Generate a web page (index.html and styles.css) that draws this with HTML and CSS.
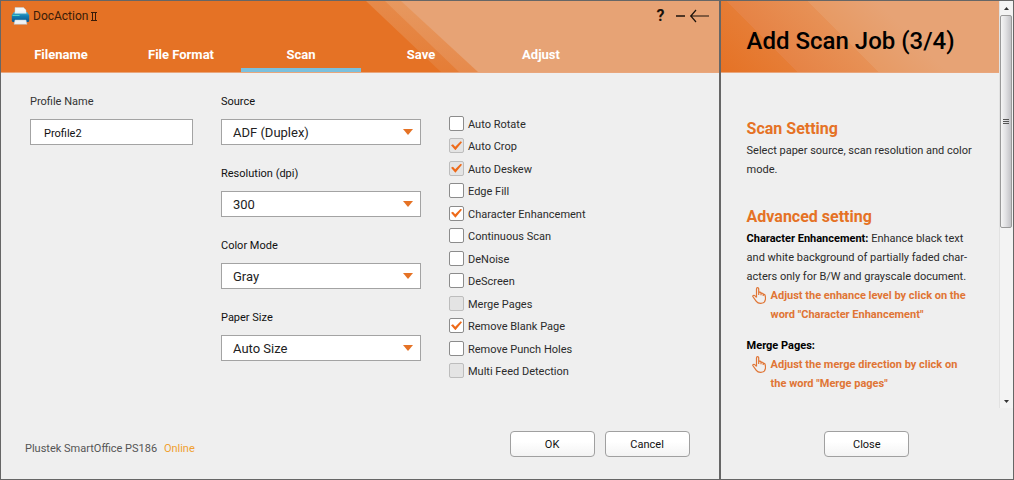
FILE: index.html
```html
<!DOCTYPE html>
<html lang="en">
<head>
<meta charset="utf-8">
<title>DocAction II</title>
<link rel="stylesheet" href="styles.css">
</head>
<body>
<main class="pane settings">
  <header class="banner">
    <svg class="stripes" viewBox="0 0 718 71" preserveAspectRatio="xMinYMin slice" aria-hidden="true">
      <defs>
        <linearGradient id="fade1" x1="0" y1="0" x2="0" y2="1"><stop offset="0" stop-color="#e68a4a"/><stop offset="1" stop-color="#e57d36"/></linearGradient>
        <linearGradient id="fade2" x1="0" y1="0" x2="0" y2="1"><stop offset="0" stop-color="#e7985f"/><stop offset="1" stop-color="#e68a4c"/></linearGradient>
      </defs>
      <path fill="url(#fade1)" d="M365 0H720V71H440Z"/>
      <path fill="url(#fade2)" d="M384 0H720V71H458Z"/>
      <path fill="#e7a375" d="M400 0H720V71H477Z"/>
    </svg>
    <div class="titlebar">
      <svg class="printer" viewBox="0 0 18 18" aria-hidden="true">
        <defs>
          <linearGradient id="body" x1="0" y1="0" x2="0" y2="1"><stop offset="0" stop-color="#4fb4cf"/><stop offset=".4" stop-color="#137fb4"/><stop offset="1" stop-color="#0a568c"/></linearGradient>
        </defs>
        <path d="M3.500 .5H12L14.500 3V8H3.500Z" fill="#f4f7f8" stroke="#c4cdd2" stroke-width=".5"/>
        <path d="M2.500 5H15.500L17.700 8V13.500Q17.700 15 16.200 15H1.800Q.3 15 .3 13.500V8Z" fill="url(#body)"/>
        <path d="M3.500 4.500H14.500L15 6.500H3Z" fill="#e9f1f4"/>
        <path d="M1 8.500H8" stroke="#4fd0c8"/>
        <path d="M3.500 13H14.500L15.500 17.300H2.500Z" fill="#eef2f5" stroke="#b5c5cf" stroke-width=".5"/>
      </svg>
      <span class="app-name">DocAction</span>
      <svg class="roman" viewBox="0 0 6 9" aria-hidden="true"><path d="M0 .5H6M0 8.500H6M1.500 0V9M4.500 0V9" fill="none" stroke="#3a1c08"/></svg>
      <div class="window-buttons">
        <button type="button" class="win help">?</button>
        <button type="button" class="win" aria-label="Minimize"><svg width="9" height="18" viewBox="0 0 9 18"><path d="M0 9H9" stroke="#1c120b" stroke-width="1.500"/></svg></button>
        <button type="button" class="win" aria-label="Back"><svg width="19" height="18" viewBox="0 0 19 18"><path d="M0 9H19M6 3L0.800 9L6 15" fill="none" stroke="#1c120b" stroke-width="1.200"/></svg></button>
      </div>
    </div>
    <nav class="tabs">
      <a href="#filename">Filename</a>
      <a href="#format">File Format</a>
      <a href="#scan" class="current" aria-current="page">Scan</a>
      <a href="#save">Save</a>
      <a href="#adjust">Adjust</a>
    </nav>
  </header>
  <form class="form" id="scan">
    <div class="field profile">
      <label for="profile">Profile Name</label>
      <input id="profile" type="text" value="Profile2">
    </div>
    <div class="selects">
      <div class="field"><label for="source">Source</label><div class="drop"><select id="source"><option>ADF (Duplex)</option></select></div></div>
      <div class="field"><label for="resolution">Resolution (dpi)</label><div class="drop"><select id="resolution"><option>300</option></select></div></div>
      <div class="field"><label for="mode">Color Mode</label><div class="drop"><select id="mode"><option>Gray</option></select></div></div>
      <div class="field"><label for="paper">Paper Size</label><div class="drop"><select id="paper"><option>Auto Size</option></select></div></div>
    </div>
    <div class="checks">
      <label><input type="checkbox">Auto Rotate</label>
      <label><input type="checkbox" checked disabled>Auto Crop</label>
      <label><input type="checkbox" checked disabled>Auto Deskew</label>
      <label><input type="checkbox">Edge Fill</label>
      <label><input type="checkbox" checked>Character Enhancement</label>
      <label><input type="checkbox">Continuous Scan</label>
      <label><input type="checkbox">DeNoise</label>
      <label><input type="checkbox">DeScreen</label>
      <label><input type="checkbox" disabled>Merge Pages</label>
      <label><input type="checkbox" checked>Remove Blank Page</label>
      <label><input type="checkbox">Remove Punch Holes</label>
      <label><input type="checkbox" disabled>Multi Feed Detection</label>
    </div>
  </form>
  <footer class="footer">
    <p class="device">Plustek SmartOffice PS186 <span class="online">Online</span></p>
    <div class="actions">
      <button type="button" class="btn">OK</button>
      <button type="button" class="btn">Cancel</button>
    </div>
  </footer>
</main>
<aside class="pane guide">
  <div class="viewport">
    <article class="article">
      <header class="guide-head"><h1>Add Scan Job (3/4)</h1></header>
      <div class="guide-body">
        <section>
          <h2>Scan Setting</h2>
          <p>Select paper source, scan resolution and color<br>mode.</p>
        </section>
        <section>
          <h2>Advanced setting</h2>
          <p><b>Character Enhancement:</b> Enhance black text<br>and white background of partially faded char-<br>acters only for B/W and grayscale document.</p>
          <div class="tip">
            <svg class="hand" viewBox="0 0 14 17" aria-hidden="true"><path d="M4.500 10.500V2Q4.500 .7 5.600 .7T6.700 2V8M6.700 7V6Q7 5 8 5.200T9 6.300V8.300M9 7Q9.300 5.800 10.300 6.200T11.200 7.200V9M11.200 8Q12 6.800 12.800 7.700Q13.800 10 13.400 12.500Q12.800 16.300 8.800 16.300Q5.800 16.400 4.300 14.300L.8 9.500Q.6 8.200 2 8.300Q3.500 8.800 4.500 10.500" fill="none" stroke="currentColor" stroke-width="1.200" stroke-linejoin="round"/></svg>
            <p>Adjust the enhance level by click on the<br>word "Character Enhancement"</p>
          </div>
          <h3>Merge Pages:</h3>
          <div class="tip">
            <svg class="hand" viewBox="0 0 14 17" aria-hidden="true"><path d="M4.500 10.500V2Q4.500 .7 5.600 .7T6.700 2V8M6.700 7V6Q7 5 8 5.200T9 6.300V8.300M9 7Q9.300 5.800 10.300 6.200T11.200 7.200V9M11.200 8Q12 6.800 12.800 7.700Q13.800 10 13.400 12.500Q12.800 16.300 8.800 16.300Q5.800 16.400 4.300 14.300L.8 9.500Q.6 8.200 2 8.300Q3.500 8.800 4.500 10.500" fill="none" stroke="currentColor" stroke-width="1.200" stroke-linejoin="round"/></svg>
            <p>Adjust the merge direction by click on<br>the word "Merge pages"</p>
          </div>
        </section>
      </div>
    </article>
    <div class="scrollbar" aria-hidden="true">
      <svg class="arrow" viewBox="0 0 13 14"><path d="M4 9L6.500 6L9 9Z" fill="#333"/></svg>
      <div class="thumb"><span></span><span></span><span></span></div>
      <svg class="arrow" viewBox="0 0 13 14"><path d="M4 6H9L6.500 9Z" fill="#333"/></svg>
    </div>
  </div>
  <footer class="guide-foot"><button type="button" class="btn">Close</button></footer>
</aside>
</body>
</html>
```

FILE: styles.css
```css
* { box-sizing: border-box; }
body {
  margin: 0;
  min-height: 100vh;
  display: flex;
  background: #efefef;
  color: #2b2b2b;
  font: 11px/16px Roboto, "Liberation Sans", sans-serif;
}
h1, h2, h3, p { margin: 0; }
.pane { display: flex; flex-direction: column; border: 1px solid #666; }
.settings { flex: 719 1 0; }
.guide { flex: 293 1 0; }

.banner { position: relative; height: 72px; background: #e57225; border-bottom: 1px solid #e9a67c; display: flex; flex-direction: column; }
.stripes { position: absolute; inset: 0; width: 100%; height: 100%; }
.titlebar { position: relative; display: flex; align-items: center; height: 30px; padding: 0 10px; color: #3a1c08; }
.printer { width: 19px; height: 18px; margin-right: 3px; }
.app-name { font-size: 12px; }
.roman { width: 6px; height: 9px; margin-left: 3px; }
.window-buttons { display: flex; align-items: center; margin-left: auto; gap: 5px; }
.win { display: flex; border: 0; padding: 0; background: none; color: #1c120b; font: 700 16px/18px Roboto, sans-serif; }
.help { margin-right: 6px; }
.tabs { position: relative; flex: 1; display: flex; }
.tabs a { flex: 0 1 120px; display: flex; align-items: center; justify-content: center; padding-top: 11px; border-bottom: 4px solid transparent; color: #fff; font-size: 13px; font-weight: 700; text-decoration: none; }
.tabs .current { border-bottom-color: #7bc0dd; }

.form { flex: 1; display: grid; grid-template-columns: 163px 200px auto; column-gap: 28px; justify-content: start; align-items: start; padding: 21px 28px 0 29px; }
.field { display: flex; flex-direction: column; gap: 9px; }
.field input, .drop select { width: 100%; height: 26px; border: 1px solid #a3a3a3; border-radius: 0; background: #fff; }
.field input { padding: 2px 13px 0; color: #111; font: 11px Roboto, sans-serif; }
.profile { color: #333; }
.selects { display: grid; gap: 21px; color: #111; }
.drop { display: grid; align-items: center; }
.drop select { grid-area: 1 / 1; appearance: none; padding: 0 30px 0 11px; color: #222; font: 13px Roboto, sans-serif; }
.drop::after { content: ""; grid-area: 1 / 1; justify-self: end; margin-right: 8px; border: 5px solid transparent; border-top: 6px solid #e57225; border-bottom: 0; pointer-events: none; }
.checks { display: grid; grid-auto-rows: 1fr; min-height: 270px; margin-top: 19px; }
.checks label { display: flex; align-items: center; gap: 4px; padding-top: 1px; }
.checks input { appearance: none; width: 15px; height: 15px; margin: 0 0 3px; border: 1px solid #8c8c8c; border-radius: 2px; background: #fff; display: grid; place-items: center; }
.checks input:disabled { background: #e4e4e4; border-color: #bdbdbd; }
.checks input:checked::after { content: ""; width: 11px; height: 9px; background: #ee6a19; clip-path: polygon(0 45%, 18% 32%, 38% 62%, 88% 0, 100% 12%, 40% 100%); }

.footer { display: flex; align-items: center; justify-content: space-between; padding: 0 29px 22px 24px; color: #555; }
.device { padding-top: 10px; }
.online { margin-left: 4px; color: #f0a030; }
.actions { display: flex; gap: 10px; }
.btn { width: 85px; height: 26px; border: 1px solid #a0a0a0; border-radius: 4px; background: linear-gradient(#fff 40%, #f3f3f3); color: #111; font: 11px Roboto, sans-serif; }

.viewport { display: flex; }
.article { flex: 1; color: #2b2b2b; }
.guide-head { display: flex; align-items: center; height: 72px; padding: 8px 0 0 26px; border-bottom: 1px solid #e9a67c; background: linear-gradient(45deg, #e57225, #e67d36 22%, #e68345 22%, #e79156 45%, #e79a64 45%, #e7a375 65%); }
h1 { color: #000; font-size: 24px; line-height: 28px; font-weight: 500; }
.guide-body { padding: 46px 0 0 26px; line-height: 19px; display: grid; gap: 28px; }
h2 { margin-bottom: 2px; color: #e57225; font-size: 16px; line-height: 20px; font-weight: 700; }
h3 { margin-top: 12px; font-size: 11px; font-weight: 700; line-height: 19px; color: #000; }
b { color: #000; font-weight: 700; }
.tip { display: flex; align-items: flex-start; gap: 5px; padding-left: 5px; color: #e07535; font-weight: 700; }
.hand { width: 14px; height: 19px; }
.scrollbar { display: flex; flex-direction: column; width: 14px; height: 407px; border-left: 1px solid #e2e2e2; background: #f3f3f3; }
.arrow { width: 13px; height: 14px; }
.thumb { flex: 0 0 213px; margin-right: 1px; display: flex; flex-direction: column; align-items: center; justify-content: center; gap: 1px; border: 1px solid #999; border-radius: 2px; background: linear-gradient(90deg, #f5f5f5, #e2e2e4 45%, #c2c2c6); }
.thumb span { width: 6px; height: 1px; background: #555; }
.thumb + .arrow { margin-top: auto; }
.guide-foot { display: flex; justify-content: center; margin-top: auto; padding-bottom: 22px; }
```
